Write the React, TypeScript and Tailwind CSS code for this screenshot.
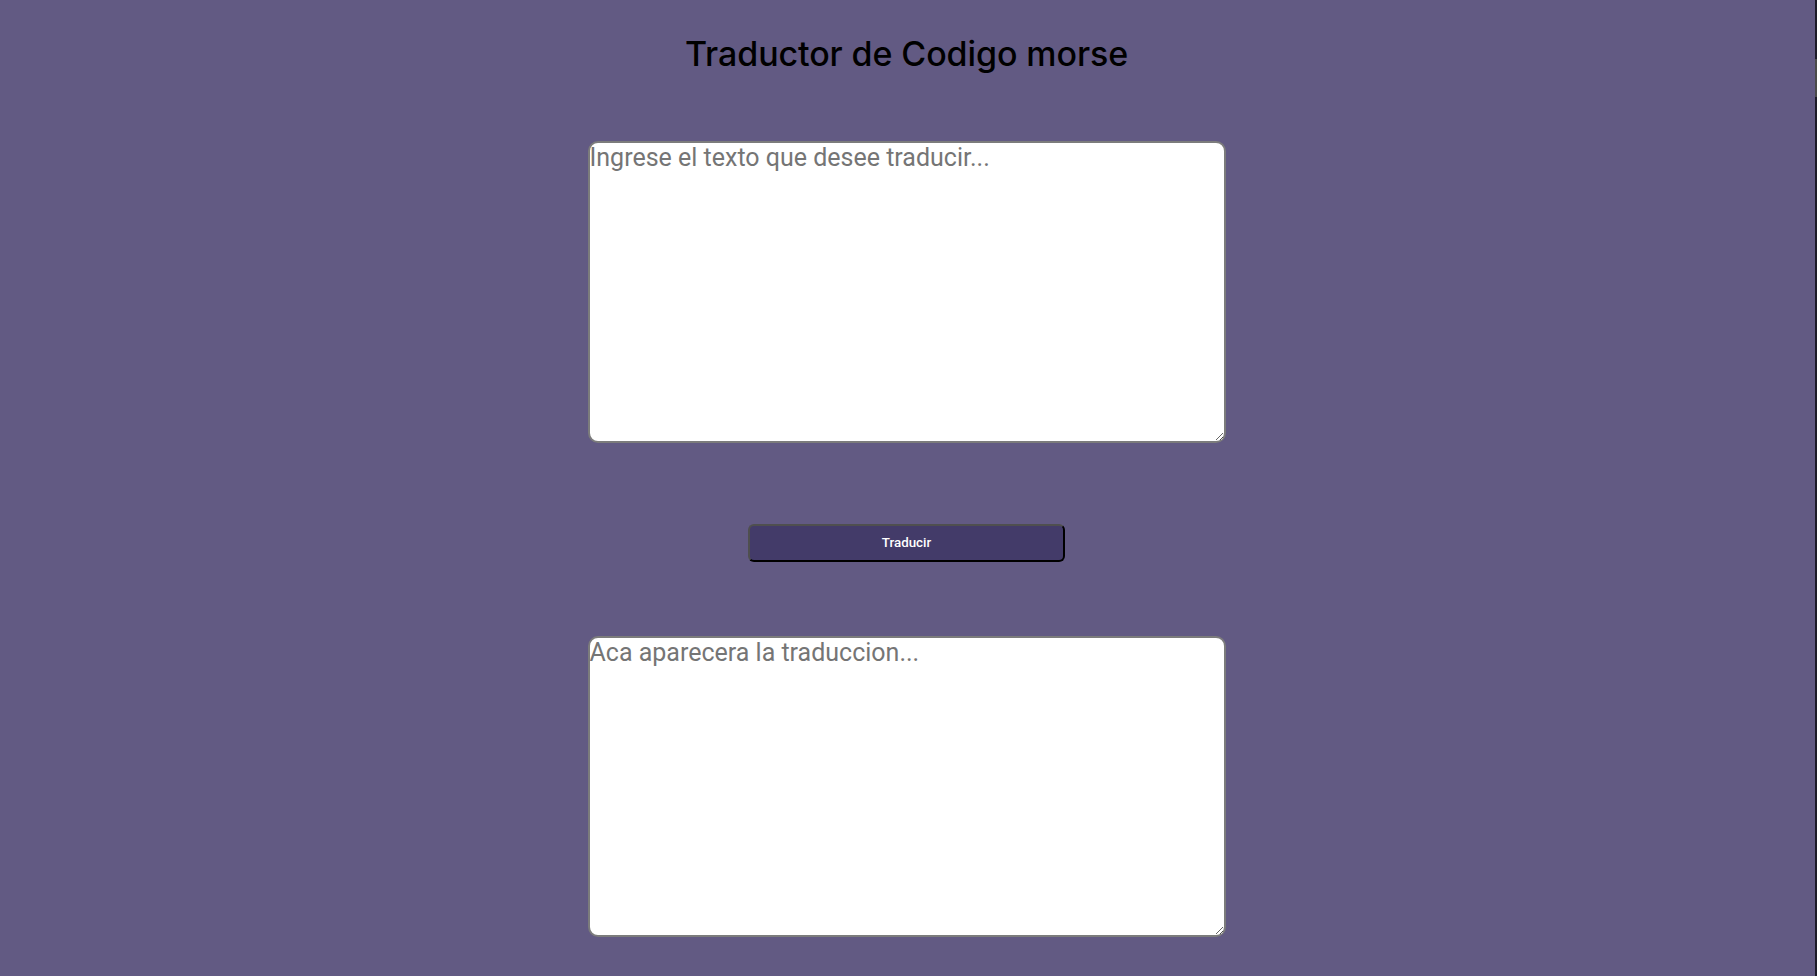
import * as React from "react";

export default function App() {
  const [texto, setTexto] = React.useState("");
  const [traduccion, setTraduccion] = React.useState("");

  return (
    <div className="min-h-screen w-full flex bg-[#625a83]" style={{ fontFamily: "Roboto, 'Liberation Sans', sans-serif" }}>
      <main className="flex-1 flex flex-col items-center pr-[2px]">
        <h1 className="mt-[29px] text-[34px] leading-[50px] font-medium text-black tracking-[-0.1px]" style={{ fontFamily: "Inter, 'Noto Sans', sans-serif" }}>
          Traductor de Codigo morse
        </h1>

        <textarea
          value={texto}
          onChange={(e) => setTexto(e.target.value)}
          placeholder="Ingrese el texto que desee traducir..."
          className="mt-[62px] w-[638px] h-[302px] bg-white border-2 border-[#7c7c7c] rounded-[10px] p-0 text-[25px] leading-[29px] text-black placeholder:text-[#757575] outline-none"
        />

        <button
          onClick={() => setTraduccion(texto)}
          className="mt-[81px] w-[317px] h-[38px] bg-[#433b69] text-white text-[13.33px] font-medium rounded-[6px] border-2 border-t-[#4f4f4f] border-l-[#4f4f4f] border-r-black border-b-black"
        >
          Traducir
        </button>

        <textarea
          value={traduccion}
          readOnly
          placeholder="Aca aparecera la traduccion..."
          className="mt-[74px] w-[638px] h-[301px] bg-white border-2 border-[#7c7c7c] rounded-[10px] p-0 text-[25px] leading-[29px] text-black placeholder:text-[#757575] outline-none"
        />
      </main>

      <aside className="w-[2px] bg-[#1c1a28]">
        <div className="mt-[59px] h-[38px] bg-[#4a4a4a]" />
      </aside>
    </div>
  );
}
